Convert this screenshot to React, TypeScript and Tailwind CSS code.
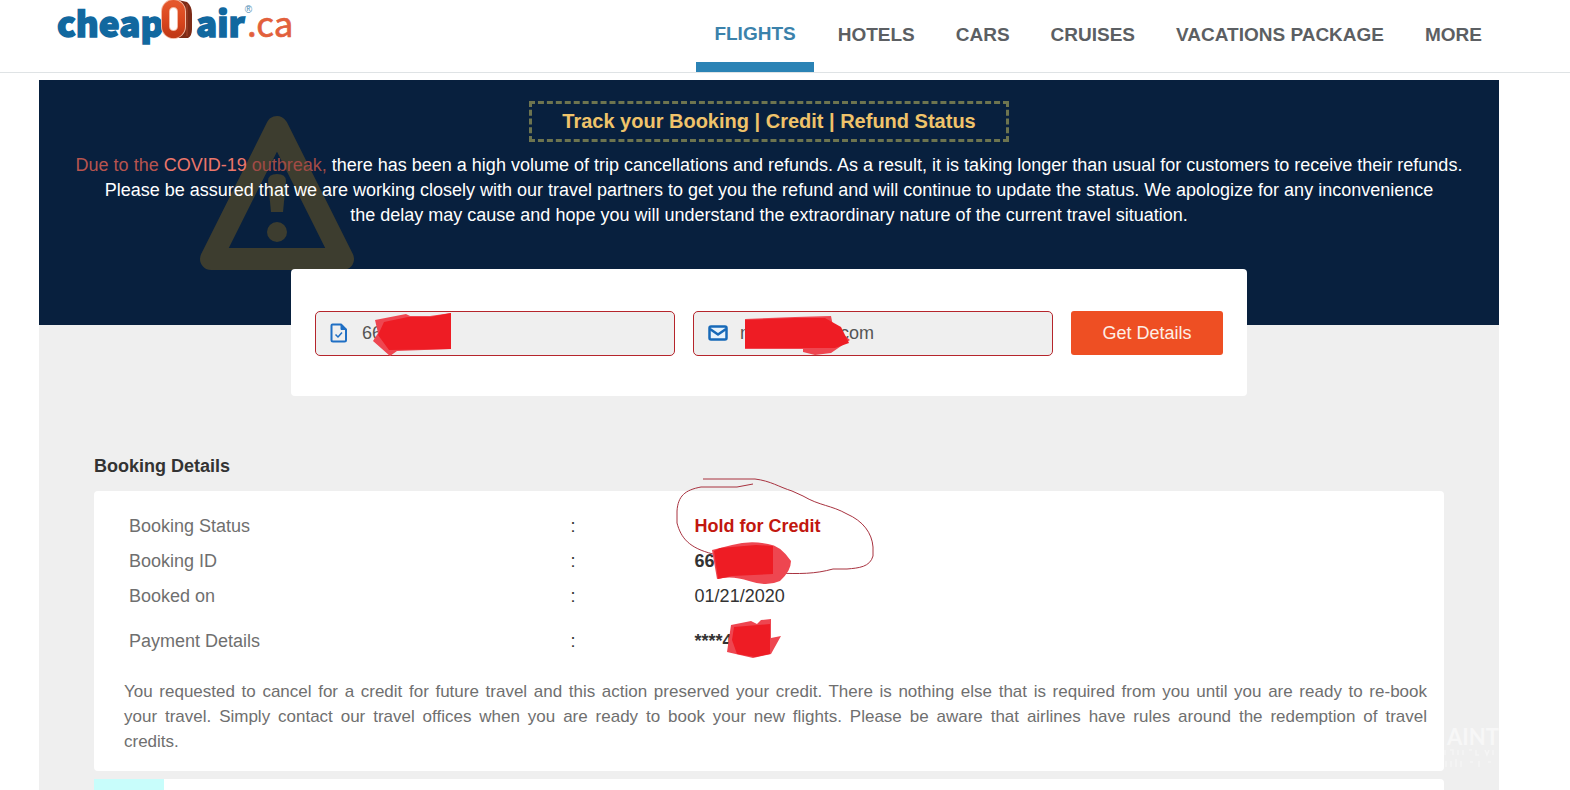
import { useState } from 'react';

const navItems = ['Flights', 'Hotels', 'Cars', 'Cruises', 'Vacations Package', 'More'];

const notice = [
  'You requested to cancel for a credit for future travel and this action preserved your credit. There is nothing else that is required from you until you are ready to re-book',
  'your travel. Simply contact our travel offices when you are ready to book your new flights. Please be aware that airlines have rules around the redemption of travel',
];

function Logo() {
  return (
    <svg width="240" height="60" viewBox="0 0 240 60" className="block">
      <defs>
        <linearGradient id="ring" x1="0" y1="0" x2="0" y2="1">
          <stop offset="0" stopColor="#e4572b" />
          <stop offset="0.6" stopColor="#d8451d" />
          <stop offset="1" stopColor="#c23a17" />
        </linearGradient>
      </defs>
      <g fontFamily="'Noto Sans CJK SC', 'Liberation Sans', sans-serif" fill="#11689f">
        <text x="1" y="37" fontSize="35" fontWeight="900" stroke="#11689f" strokeWidth="1.500">cheap</text>
        <text x="140" y="37" fontSize="35">
          <tspan fontWeight="900" stroke="#11689f" strokeWidth="1.500">air</tspan>
          <tspan dy="-24" fontSize="10" fontFamily="'Liberation Sans', sans-serif" fill="#4d8db5">®</tspan>
          <tspan dy="24" dx="-5" fill="#e2603c" stroke="#e2603c" strokeWidth="0.600">.ca</tspan>
        </text>
      </g>
      <path d="M122 0 L131 2 Q136 6 136 14 V29 Q136 36 132 38 L120 38 Z" fill="#7c2b17" />
      <path d="M131 4 V36" stroke="#a8452a" strokeWidth="1" />
      <rect x="109.500" y="3.500" width="16" height="31" rx="8" fill="#fff" stroke="#f3b9a2" strokeWidth="9" />
      <rect x="109.500" y="3.500" width="16" height="31" rx="8" fill="none" stroke="url(#ring)" strokeWidth="7" />
    </svg>
  );
}

function WarningIcon() {
  return (
    <svg viewBox="0 0 156 156" width="156" height="156" className="absolute left-[160px] top-[34px]">
      <path d="M78 13 L144 145 H12 Z" fill="none" stroke="#3d3d2f" strokeWidth="22" strokeLinejoin="round" />
      <path d="M69 67 Q69 60 78 60 Q87 60 87 67 L84 98 H72 Z" fill="#3d3d2f" />
      <circle cx="78" cy="118" r="10" fill="#3d3d2f" />
    </svg>
  );
}

function FileIcon() {
  return (
    <svg viewBox="0 0 18 20" width="18" height="20" className="shrink-0" fill="none" stroke="#1f6fc4" strokeWidth="2" strokeLinejoin="round">
      <path d="M2.500 1.500 H11 L16 6.500 V17 Q16 18.500 14.500 18.500 H3 Q1.500 18.500 1.500 17 V2.500 Q1.500 1.500 2.500 1.500 Z" />
      <path d="M11 1.500 V6.500 H16 Z" fill="#1f6fc4" strokeWidth="1" />
      <path d="M5.500 11.500 L8 14 L12 9.500" strokeWidth="1.500" />
    </svg>
  );
}

function MailIcon() {
  return (
    <svg viewBox="0 0 20 18" width="20" height="18" className="shrink-0" fill="none" stroke="#1769b8" strokeWidth="2.500" strokeLinejoin="round">
      <rect x="1.500" y="2.500" width="17" height="13" rx="1.500" fill="#e8f3fc" />
      <path d="M2 5 L10 10.500 L18 5" />
    </svg>
  );
}

function Watermark() {
  return (
    <div className="pointer-events-none absolute right-0 top-[645px] flex flex-col items-end text-[#f7f7f7]">
      <span className="font-['Lato','Open_Sans',sans-serif] text-[22px] leading-6 font-bold">AINT</span>
      <svg viewBox="0 0 56 20" width="56" height="20" stroke="#f5f5f5" strokeWidth="1.500" fill="none">
        <path d="M2 1 V6 M7 1 H10 V6 M15 1 V6 M20 6 V1 M26 1 H29 M33 1 V6 H36 M42 1 L44 6 L46 1 M50 1 V6" />
        <path d="M3 12 V18 M8 18 V12 M13 10 V18 M18 12 V18 M27 13 H30 M36 12 V18 M45 13 H48" />
      </svg>
    </div>
  );
}

export default function App() {
  const [booking, setBooking] = useState('66');
  const [email, setEmail] = useState('m                .com');

  const rows = [
    {
      label: 'Booking Status',
      value: <strong className="text-[#c2170f]">Hold for Credit</strong>,
      height: 'h-[35px]',
      mark: (
        <svg viewBox="0 0 200 100" width="200" height="100" className="pointer-events-none absolute -left-5 -top-[35px] z-10" fill="none" stroke="#a8323f" strokeWidth="1">
          <path d="M28 2 H80 C96 4 104 10 117 14 L128 19 C145 29 156 28 172 37 C188 44 197 56 198 70 V79 C195 90 184 91 172 92 L158 92 C140 97 125 97 100 96" />
          <path d="M78 7 L62 10 H26 C10 13 3 19 2 34 V46 C6 61 14 71 38 77" />
        </svg>
      ),
    },
    {
      label: 'Booking ID',
      value: <strong>66</strong>,
      height: 'h-[35px]',
      mark: (
        <svg viewBox="0 0 80 44" width="80" height="44" className="pointer-events-none absolute left-[17px] -top-[6px] z-20">
          <path d="M0 9 L20 4 Q38 -1 56 3 Q68 4 79 20 Q79 30 68 40 Q55 46 37 40 Q20 34 5 38 Z" fill="#ee4650" />
          <path d="M2 10 L8 7 L44 4 L61 5 V33 L20 35 L6 38 Z" fill="#ee1c24" />
        </svg>
      ),
    },
    { label: 'Booked on', value: '01/21/2020', height: 'h-[35px]', mark: null },
    {
      label: 'Payment Details',
      value: <strong>****4</strong>,
      height: 'h-[55px]',
      mark: (
        <svg viewBox="0 0 56 42" width="56" height="42" className="pointer-events-none absolute left-[32px] -top-[9px] z-20">
          <path d="M4 7 L24 3 L30 6 L34 2 L44 1 V20 L54 18 L44 36 L26 40 L0 34 Z" fill="#ee4650" />
          <path d="M7 9 L43 6 V36 L28 39 L10 36 L5 22 Z" fill="#ee1c24" />
        </svg>
      ),
    },
  ];

  return (
    <div className="h-screen overflow-hidden bg-white font-['Liberation_Sans',Arial,sans-serif] text-lg text-[#333]">
      <header className="flex h-[73px] justify-between border-b border-[#dfe3e5] pl-14 pr-[68px]">
        <a href="#" aria-label="cheapOair.ca">
          <Logo />
        </a>
        <nav className="flex gap-px">
          {navItems.map((item, i) => (
            <a
              key={item}
              href="#"
              className={`flex items-start border-b-[10px] text-[19px] leading-7 font-bold uppercase ${
                i === 0 ? 'mr-[3px] border-[#2b83b5] px-[18px] pt-5 text-[#3b82ab]' : 'border-transparent px-5 pt-[21px] text-[#5c5f63]'
              }`}
            >
              {item}
            </a>
          ))}
        </nav>
      </header>

      <main className="relative mt-[7px] ml-[39px] mr-[71px] bg-[#efefef]">
        <section className="relative h-[245px] bg-[#08203e] px-4 pt-[21px] text-center text-white">
          <WarningIcon />
          <div className="relative">
            <h1 className="mx-auto w-fit border-[3px] border-dashed border-[#6d744f] px-[30px] text-[20px] leading-[35px] font-bold text-[#efc36a]">
              Track your Booking | Credit | Refund Status
            </h1>
            <p className="mt-[11px] leading-[25px]">
              <span className="text-[#b7544f]">Due to the </span>
              <span className="text-[#ec776b]">COVID-19</span>
              <span className="text-[#a04b46]"> outbreak,</span> there has been a high volume of trip cancellations and refunds. As a result, it is taking longer than usual for customers to receive their refunds.
              <br />
              Please be assured that we are working closely with our travel partners to get you the refund and will continue to update the status. We apologize for any inconvenience
              <br />
              the delay may cause and hope you will understand the extraordinary nature of the current travel situation.
            </p>
          </div>
        </section>

        <form
          className="relative mx-auto -mt-14 flex h-[127px] w-[956px] max-w-full items-start gap-[18px] rounded-[4px] bg-white px-6 pt-[42px]"
          onSubmit={e => e.preventDefault()}
        >
          <label className="relative flex h-[45px] flex-1 items-center gap-[14px] rounded-[5px] border border-[#b5252b] bg-[#efefef] pb-[2px] pl-[14px]">
            <FileIcon />
            <input
              aria-label="Booking number"
              value={booking}
              onChange={e => setBooking(e.target.value)}
              className="w-full bg-transparent text-lg text-[#555] outline-none"
            />
            <svg viewBox="0 0 80 44" width="80" height="44" className="pointer-events-none absolute left-[56px] top-0">
              <path d="M3 8 L34 2 L38 4 L58 4 L79 1 V37 L25 39 L18 44 L1 29 L6 21 Z" fill="#ee4650" />
              <path d="M12 10 L36 5 H58 L79 1 V37 L17 38 L6 23 Z" fill="#ee1c24" />
            </svg>
          </label>
          <label className="relative flex h-[45px] flex-1 items-center gap-3 rounded-[5px] border border-[#b5252b] bg-[#efefef] pb-[2px] pl-[14px]">
            <MailIcon />
            <input
              aria-label="Email"
              value={email}
              onChange={e => setEmail(e.target.value)}
              className="w-full bg-transparent text-lg text-[#555] outline-none"
            />
            <svg viewBox="0 0 106 40" width="106" height="40" className="pointer-events-none absolute left-[51px] top-[4px]">
              <path d="M0 3 L50 1 L86 0 L88 10 L105 24 L86 37 L70 39 L58 36 V33 H0 Z" fill="#ee4650" />
              <path d="M0 4 L50 2 H80 L96 11 L104 27 L90 32 H0 Z" fill="#ee1c24" />
            </svg>
          </label>
          <button type="submit" className="h-11 w-[152px] rounded-[3px] bg-[#ee4f23] text-lg text-[#fdeee6]">
            Get Details
          </button>
        </form>

        <section className="px-[55px] pt-[57px]">
          <h2 className="leading-[26px] font-bold">Booking Details</h2>
          <div className="mt-3 rounded-[4px] bg-white px-[30px] pt-[17px] pb-[17px]">
            <table className="w-full table-fixed text-left">
              <tbody>
                {rows.map(row => (
                  <tr key={row.label} className={row.height}>
                    <th scope="row" className="w-[34%] pl-[5px] font-normal text-[#6f6f6f]">{row.label}</th>
                    <td className="w-[132px] pl-2">:</td>
                    <td>
                      <div className="relative">
                        {row.value}
                        {row.mark}
                      </div>
                    </td>
                  </tr>
                ))}
              </tbody>
            </table>
            <p className="mt-[11px] -mr-[13px] text-justify text-[17px] leading-[25px] text-[#6f6f6f]">
              {notice.map(line => (
                <span key={line} className="block [text-align-last:justify]">{line}</span>
              ))}
              credits.
            </p>
          </div>
          <div className="mt-2 h-20 rounded-[4px] bg-white">
            <div className="h-full w-[70px] bg-[#c8fdfb]" />
          </div>
        </section>
        <Watermark />
      </main>
    </div>
  );
}
